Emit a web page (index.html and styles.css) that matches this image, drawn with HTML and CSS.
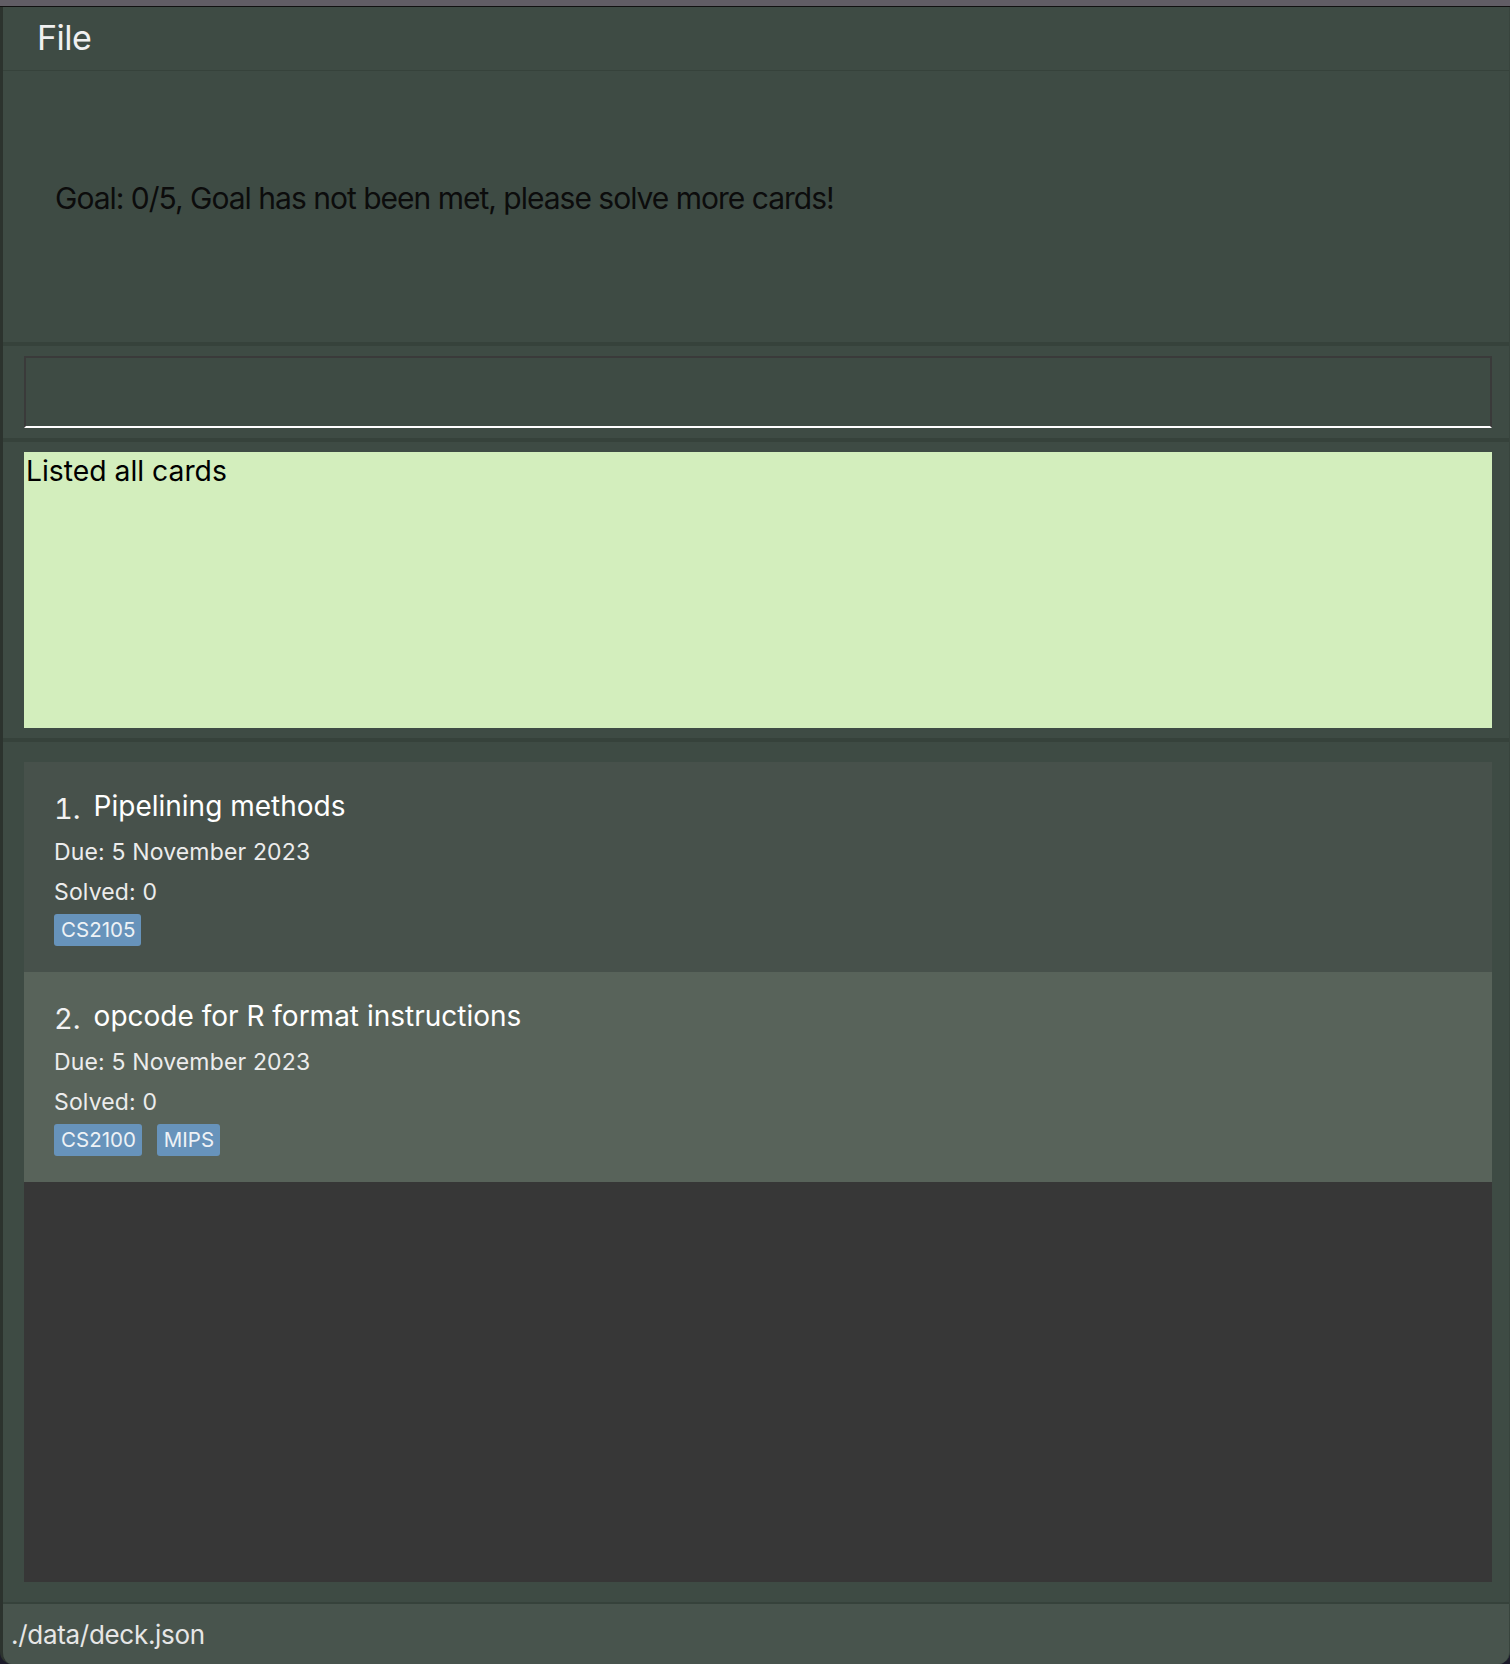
FILE: index.html
```html
<!DOCTYPE html>
<html lang="en">
<head>
<meta charset="utf-8">
<title>Deck</title>
<link rel="stylesheet" href="styles.css">
</head>
<body>
<div class="topstrip"></div>
<div class="window">
  <div class="menubar"><span class="menu-item">File</span></div>
  <div class="goal"><p class="goal-text">Goal: 0/5, Goal has not been met, please solve more cards!</p></div>
  <div class="sep"></div>
  <div class="command-area"><div class="command-box"></div></div>
  <div class="sep"></div>
  <div class="result-area"><div class="result-box">Listed all cards</div></div>
  <div class="sep"></div>
  <div class="list-area">
    <div class="list">
      <div class="card card-odd">
        <div class="title-row"><span class="num">1.</span><span class="title">Pipelining methods</span></div>
        <div class="line line-due">Due: 5 November 2023</div>
        <div class="line">Solved: 0</div>
        <div class="tags"><span class="tag">CS2105</span></div>
      </div>
      <div class="card card-even">
        <div class="title-row"><span class="num">2.</span><span class="title">opcode for R format instructions</span></div>
        <div class="line line-due">Due: 5 November 2023</div>
        <div class="line">Solved: 0</div>
        <div class="tags"><span class="tag">CS2100</span><span class="tag">MIPS</span></div>
      </div>
    </div>
  </div>
  <div class="statusbar">./data/deck.json</div>
</div>
</body>
</html>
```
FILE: styles.css
```css
html, body {
  margin: 0;
  padding: 0;
  background: #1c1b2a;
}
body {
  width: 1510px;
  height: 1664px;
  overflow: hidden;
  font-family: "Inter", "Liberation Sans", sans-serif;
}
.topstrip {
  height: 6px;
  background: #615d65;
  border-bottom: 1px solid #111111;
}
.window {
  display: flex;
  flex-direction: column;
  height: 1657px;
  background: #3e4b44;
  border-left: 3px solid #2c332e;
  border-right: 1px solid #38443d;
  border-radius: 0 0 12px 12px;
  overflow: hidden;
  box-sizing: border-box;
}
.menubar {
  height: 64px;
  box-sizing: border-box;
  border-bottom: 1px solid #36423b;
  padding-left: 34px;
  display: flex;
  align-items: center;
}
.menu-item {
  color: #f0f0f0;
  font-size: 34px;
  letter-spacing: -0.5px;
  line-height: 40px;
  margin-top: -2px;
}
.goal {
  height: 271px;
  box-sizing: border-box;
  padding: 109px 0 0 52px;
}
.goal-text {
  margin: 0;
  color: #0c0c0c;
  font-size: 30px;
  line-height: 36px;
  letter-spacing: -1px;
}
.sep {
  height: 4px;
  background: #36423b;
}
.command-area {
  height: 92px;
  box-sizing: border-box;
  padding: 10px 17px 10px 21px;
}
.command-box {
  height: 72px;
  box-sizing: border-box;
  border: 2px solid #3a3a3a;
  border-bottom: 2px solid #ffffff;
}
.result-area {
  height: 296px;
  box-sizing: border-box;
  padding: 10px 17px 10px 21px;
}
.result-box {
  height: 276px;
  background: #d3eebd;
  color: #000000;
  font-size: 28.3px;
  line-height: 38px;
  padding-left: 2px;
  box-sizing: border-box;
}
.list-area {
  height: 860px;
  box-sizing: border-box;
  padding: 20px 17px 20px 21px;
}
.list {
  height: 820px;
  background: #373737;
}
.card {
  height: 210px;
  box-sizing: border-box;
  padding: 26px 0 0 30px;
  color: #ececec;
}
.card-odd { background: #47514b; }
.card-even { background: #58635a; }
.title-row {
  line-height: 36px;
  height: 36px;
  white-space: nowrap;
}
.num {
  font-size: 29px;
  color: #f2f2f2;
  vertical-align: -3px;
  margin-right: 13px;
  font-variant-numeric: tabular-nums;
}
.title {
  font-size: 28px;
  color: #ffffff;
}
.line {
  font-size: 23px;
  line-height: 40px;
  height: 40px;
  letter-spacing: 0.15px;
}
.line-due {
  margin-top: 8px;
}
.tags {
  margin-top: 2px;
  display: flex;
  gap: 15px;
}
.tag {
  background: #6793bb;
  color: #eef2f6;
  font-size: 20.5px;
  line-height: 32px;
  height: 32px;
  padding: 0 6px 0 7px;
  border-radius: 3px;
}
.statusbar {
  flex: 1;
  border-top: 2px solid #36423b;
  background: #48544d;
  color: #e6e6e6;
  font-size: 26px;
  letter-spacing: -0.3px;
  line-height: 36px;
  padding: 13px 0 0 8px;
  box-sizing: border-box;
}
```
